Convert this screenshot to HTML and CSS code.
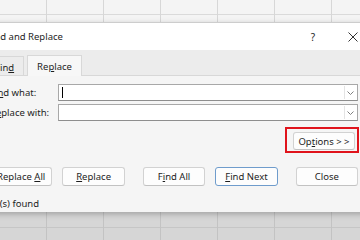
FILE: index.html
```html
<!DOCTYPE html>
<html lang="en">
<head>
    <meta charset="UTF-8">
    <title>Find and Replace</title>
    <link rel="stylesheet" href="styles.css">
</head>
<body>
    <div class="sheet sheet-top"></div>

    <div class="dialog">
        <div class="titlebar">
            <span class="title">Find and Replace</span>
            <span class="help">?</span>
            <span class="close-x">
                <svg width="10" height="10" viewBox="0 0 10 10"><path d="M0.5 0.5 9.5 9.5 M9.5 0.5 0.5 9.5" stroke="#333" stroke-width="1"/></svg>
            </span>
        </div>

        <div class="tabs">
            <div class="tab">Fin<u>d</u></div>
            <div class="tab active">Re<u>p</u>lace</div>
        </div>

        <div class="panel">
            <div class="field">
                <label>Fi<u>n</u>d what:</label>
                <div class="combo">
                    <span class="caret"></span>
                    <span class="drop"><svg width="7" height="4" viewBox="0 0 7 4"><path d="M0.5 0.5 3.5 3.5 6.5 0.5" fill="none" stroke="#808080"/></svg></span>
                </div>
            </div>
            <div class="field">
                <label>R<u>e</u>place with:</label>
                <div class="combo">
                    <span class="drop"><svg width="7" height="4" viewBox="0 0 7 4"><path d="M0.5 0.5 3.5 3.5 6.5 0.5" fill="none" stroke="#808080"/></svg></span>
                </div>
            </div>

            <div class="options-row">
                <div class="highlight">
                    <button class="btn options">Op<u>t</u>ions &gt; &gt;</button>
                </div>
            </div>

            <div class="buttons">
                <button class="btn">Replace <u>A</u>ll</button>
                <button class="btn"><u>R</u>eplace</button>
                <button class="btn group">F<u>i</u>nd All</button>
                <button class="btn default"><u>F</u>ind Next</button>
                <button class="btn group">Close</button>
            </div>
        </div>

        <div class="status">1 cell(s) found</div>
    </div>

    <div class="sheet sheet-bottom"></div>
</body>
</html>
```

FILE: styles.css
```css
body {
    margin: 0;
    width: 360px;
    height: 240px;
    overflow: hidden;
    font-family: "Noto Sans", sans-serif;
    font-size: 9.5px;
    color: #1e1e1e;
    background-color: #f3f3f3;
}

u {
    text-decoration-thickness: 1px;
    text-underline-offset: 1px;
}

/* spreadsheet behind the dialog */
.sheet {
    background-repeat: repeat-x, no-repeat;
    background-size: 57px 100%, 100% 1px;
    background-position: 46px 0, 0 14px;
}

.sheet-top {
    height: 22px;
    background-color: #f4f4f4;
    background-image:
        linear-gradient(to right, #d7d7d7 1px, transparent 1px),
        linear-gradient(#dadada, #dadada);
}

.sheet-bottom {
    height: 28px;
    background-color: #d6d6d6;
    background-image:
        linear-gradient(to right, #c3c3c3 1px, transparent 1px),
        linear-gradient(#c6c6c6, #c6c6c6);
    background-position: 46px 0, 0 15px;
}

/* dialog */
.dialog {
    margin-left: -40px;
    width: 410px;
    background-color: #f5f5f5;
    border-top: 1px solid #cdcdcd;
    box-shadow: 0 2px 6px rgba(0, 0, 0, 0.25);
    position: relative;
}

.titlebar {
    height: 27px;
    background-color: #fff;
    display: flex;
    align-items: center;
    padding-left: 27px;
}

.help {
    margin-left: auto;
    width: 20px;
    text-align: center;
    font-size: 10px;
}

.close-x {
    width: 20px;
    margin-left: 20px;
    margin-right: 7px;
    display: flex;
    justify-content: center;
}

.tabs {
    height: 25px;
    background-color: #ececec;
    display: flex;
    align-items: flex-end;
    padding-left: 25px;
}

.tab {
    height: 16px;
    padding: 2px 9px 0 9px;
    display: flex;
    align-items: center;
    border: 1px solid #d8d8d8;
    border-bottom: none;
    background-color: #ececec;
}

.tab.active {
    height: 19px;
    margin-left: 3px;
    margin-bottom: -1px;
    padding: 1px 9px 0 9px;
    background-color: #f7f7f7;
    position: relative;
}

.panel {
    border-top: 1px solid #d8d8d8;
    padding: 8px 12px 9px 30px;
}

.field {
    display: flex;
    align-items: center;
    height: 17px;
}

.field + .field {
    margin-top: 3px;
}

.field label {
    width: 68px;
}

.combo {
    flex: 1;
    height: 15px;
    border: 1px solid #a8a8a8;
    border-bottom-color: #8e8e8e;
    background-color: #fff;
    display: flex;
    align-items: center;
}

.caret {
    width: 1px;
    height: 11px;
    margin-left: 3px;
    background-color: #000;
}

.drop {
    margin-left: auto;
    width: 11px;
    height: 13px;
    margin-right: 1px;
    border-left: 1px solid #e4e4e4;
    display: flex;
    align-items: center;
    justify-content: center;
}

.options-row {
    display: flex;
    justify-content: flex-end;
    margin-top: 6px;
    margin-right: -1px;
}

.highlight {
    border: 2px solid #e0141c;
    padding: 3px 2px 1px 6px;
}

.btn {
    font-family: inherit;
    font-size: inherit;
    color: #1e1e1e;
    width: 64px;
    height: 19px;
    padding: 0;
    background-color: #fdfdfd;
    border: 1px solid #d2d2d2;
    border-bottom-color: #c2c2c2;
    border-radius: 3px;
}

.btn.options {
    width: 62px;
    height: 18px;
}

.buttons {
    display: flex;
    gap: 10px;
    margin-top: 14px;
}

.buttons .btn.group {
    margin-left: 8px;
}

.btn.default {
    border: 1px solid #6f9ccc;
}

.status {
    height: 17px;
    line-height: 17px;
    padding-left: 17px;
}
```
